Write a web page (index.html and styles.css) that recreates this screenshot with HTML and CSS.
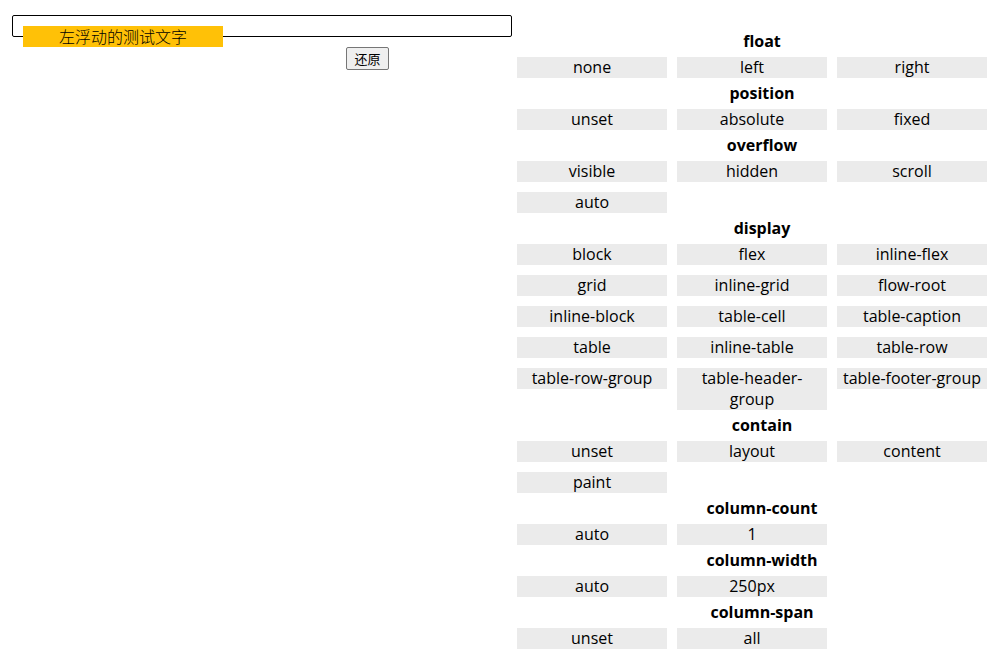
FILE: index.html
```html
<!DOCTYPE html>
<html lang="zh">
<head>
<meta charset="utf-8">
<title>BFC</title>
<link rel="stylesheet" href="styles.css">
</head>
<body>
<main class="page">
<section class="demo">
<div class="box"><div class="floated">左浮动的测试文字</div></div>
<button class="reset" type="button">还原</button>
</section>
<section class="options">
<h2 class="title">float</h2>
<div class="group"><button class="opt">none</button><button class="opt">left</button><button class="opt">right</button></div>
<h2 class="title">position</h2>
<div class="group"><button class="opt">unset</button><button class="opt">absolute</button><button class="opt">fixed</button></div>
<h2 class="title">overflow</h2>
<div class="group"><button class="opt">visible</button><button class="opt">hidden</button><button class="opt">scroll</button><button class="opt">auto</button></div>
<h2 class="title">display</h2>
<div class="group"><button class="opt">block</button><button class="opt">flex</button><button class="opt">inline-flex</button><button class="opt">grid</button><button class="opt">inline-grid</button><button class="opt">flow-root</button><button class="opt">inline-block</button><button class="opt">table-cell</button><button class="opt">table-caption</button><button class="opt">table</button><button class="opt">inline-table</button><button class="opt">table-row</button><button class="opt">table-row-group</button><button class="opt">table-header-group</button><button class="opt">table-footer-group</button></div>
<h2 class="title">contain</h2>
<div class="group"><button class="opt">unset</button><button class="opt">layout</button><button class="opt">content</button><button class="opt">paint</button></div>
<h2 class="title">column-count</h2>
<div class="group"><button class="opt">auto</button><button class="opt">1</button></div>
<h2 class="title">column-width</h2>
<div class="group"><button class="opt">auto</button><button class="opt">250px</button></div>
<h2 class="title">column-span</h2>
<div class="group"><button class="opt">unset</button><button class="opt">all</button></div>
</section>
</main>
</body>
</html>
```
FILE: styles.css
```css
body {
  margin: 0;
  font: 16px/21px "Open Sans", "Noto Sans CJK SC", sans-serif;
  color: #000;
}
.page {
  display: flex;
  padding: 15px 0 0 12px;
}
.demo {
  flex: 0 1 500px;
}
.box {
  border: 1px solid #000;
  border-radius: 2px;
  padding: 10px;
}
.floated {
  float: left;
  width: 200px;
  background: #ffc107;
  font-family: "Noto Sans CJK SC", sans-serif;
  font-weight: 300;
  text-align: center;
}
.reset {
  display: block;
  min-width: 43px;
  margin: 10px 0 0 334px;
  padding: 0 7px;
  border: 1px solid #767676;
  border-radius: 2px;
  background: #efefef;
  color: #000;
  font: 13px/21px "Noto Sans CJK SC", sans-serif;
}
.options {
  flex: 1;
  padding: 16px 0 0 5px;
}
.title {
  margin: 0;
  padding-bottom: 5px;
  font-size: 16px;
  line-height: 21px;
  text-align: center;
}
.group {
  display: grid;
  grid-template-columns: repeat(auto-fill, 150px);
  gap: 10px;
  padding-bottom: 5px;
}
.opt {
  align-self: start;
  border: 0;
  padding: 0 4px;
  background: #ebebeb;
  color: inherit;
  font: inherit;
}
```
